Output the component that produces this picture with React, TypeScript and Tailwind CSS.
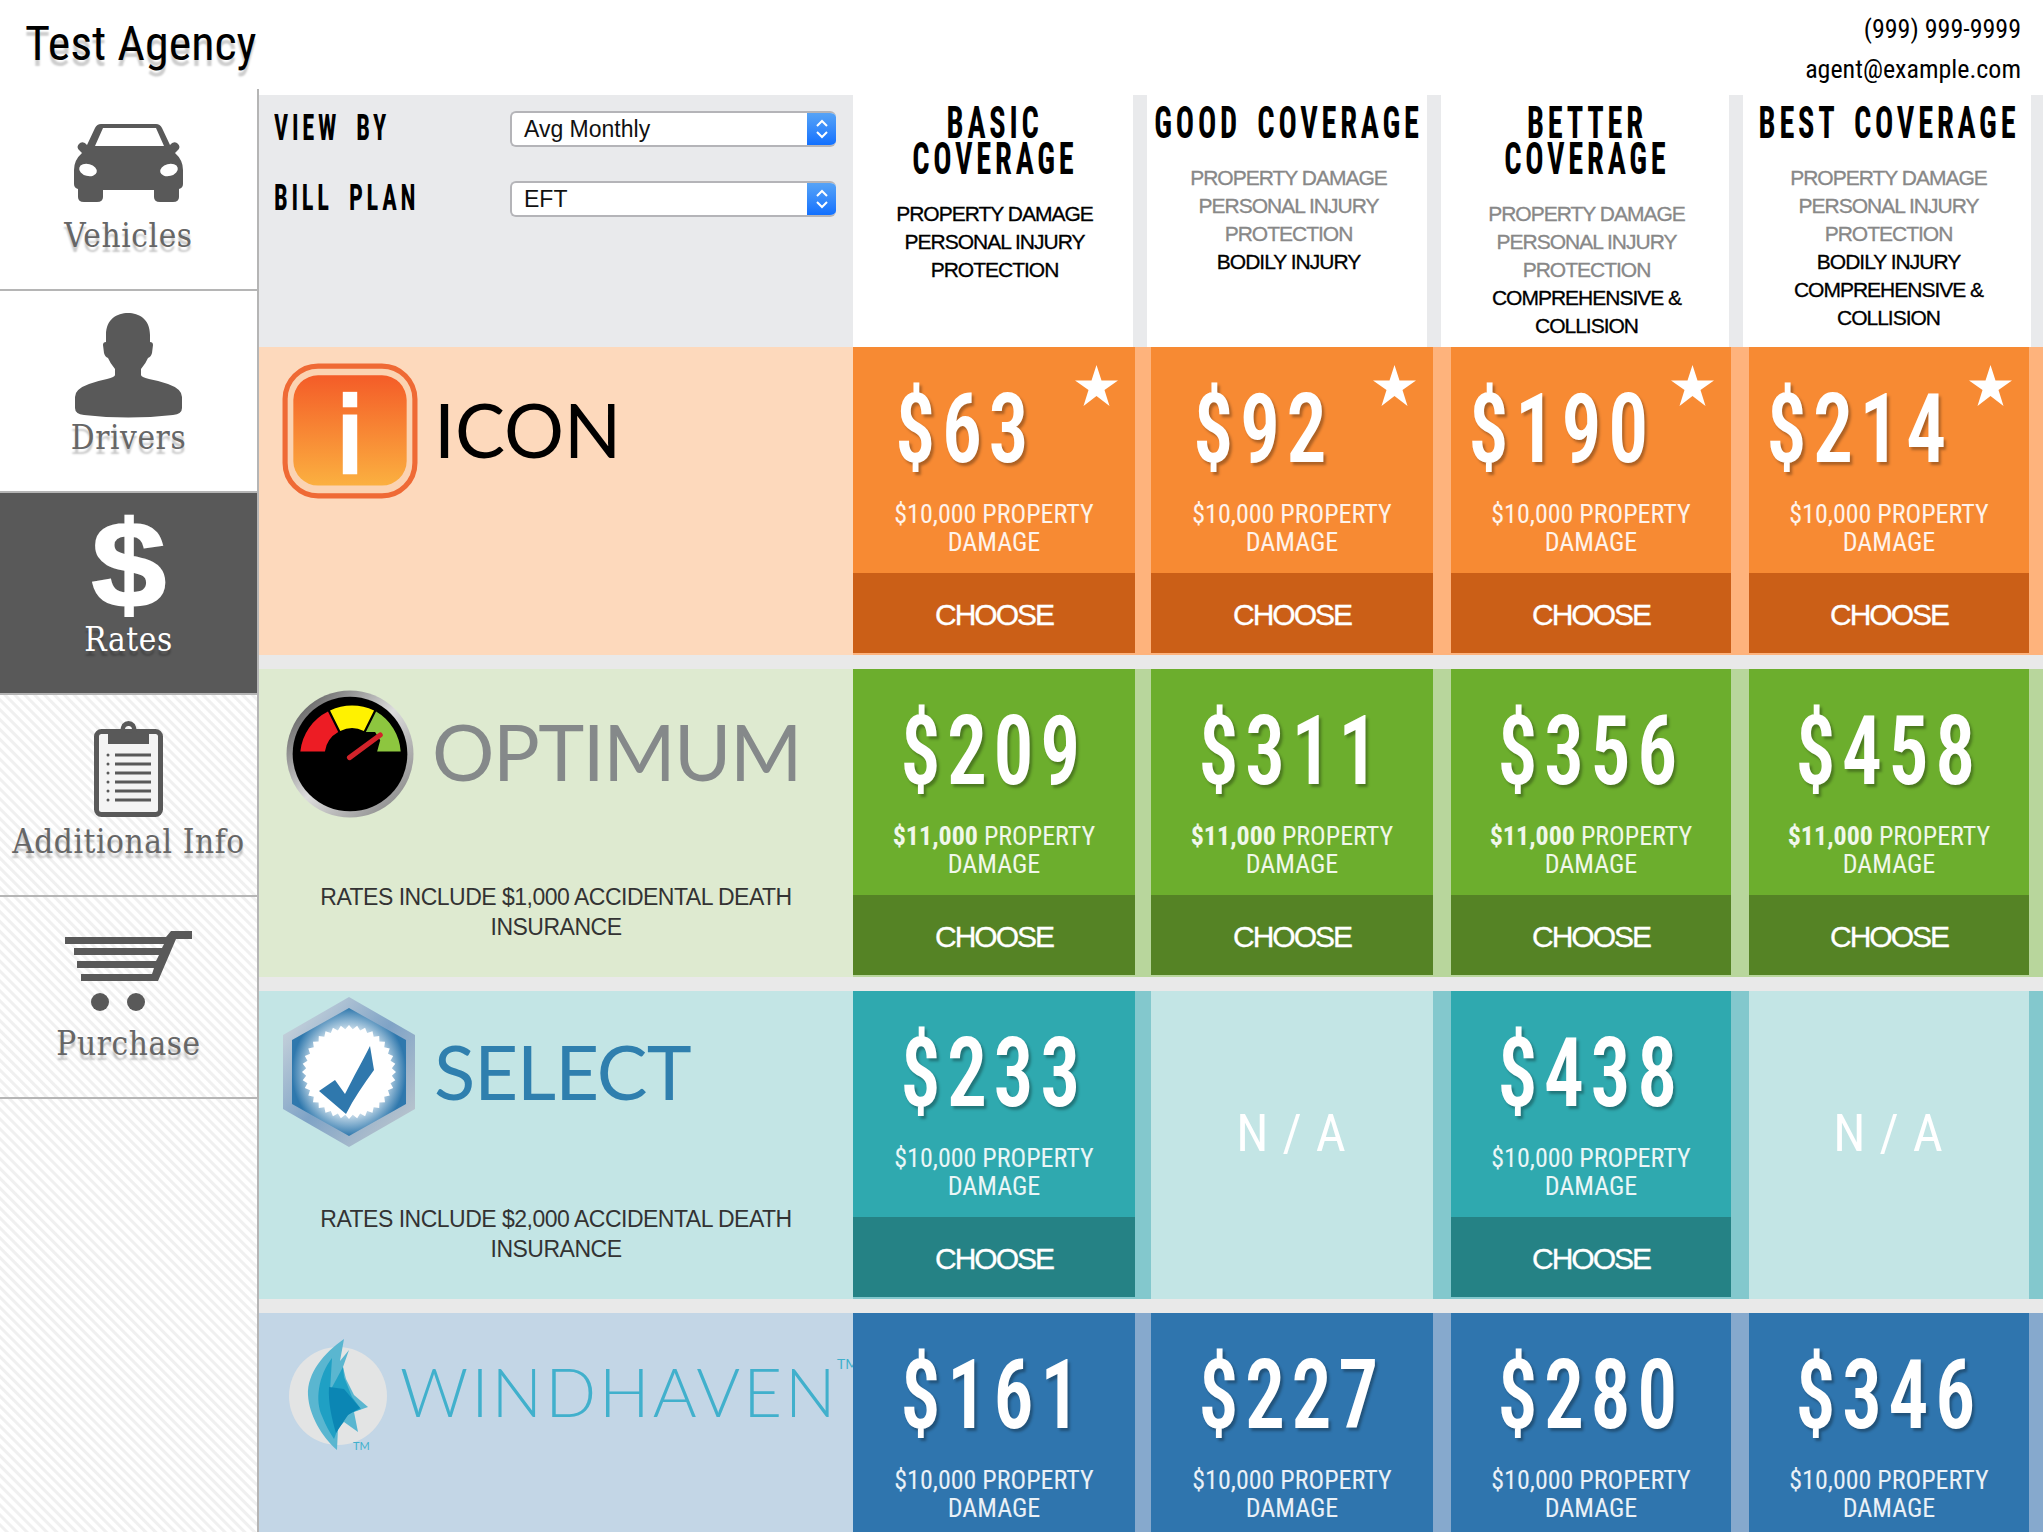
import React from "react";

// --- Types ---
type Theme = {
  left: string;
  gutter: string;
  card: string;
  band: string;
};

interface Plan {
  price: string;
  star?: boolean;
  limit?: string;
  na?: boolean;
}

interface Carrier {
  theme: Theme;
  logo: React.ReactNode;
  note?: string;
  noteGap?: string;
  plans: Plan[];
}

// Shared font stacks
const narrow = "[font-family:'Roboto_Condensed',Roboto,sans-serif] [font-stretch:75%]";
const slab = "[font-family:'DejaVu_Serif_Condensed','DejaVu_Serif',serif]";
const helv = "[font-family:'Liberation_Sans',Arial,sans-serif]";
const wordmark = "[font-family:Lato,sans-serif] whitespace-nowrap";

const stripes =
  "bg-[repeating-linear-gradient(45deg,#ffffff,#ffffff_3px,#f0f0f0_4px,#f0f0f0_6px,#ffffff_7px)]";

const cardWidths = ["w-[282px]", "ml-[16px] w-[282px]", "ml-[18px] w-[280px]", "ml-[18px] w-[280px]"];
const headWidths = ["w-[280px]", "ml-[14px] w-[280px]", "ml-[14px] w-[288px]", "ml-[14px] w-[288px]"];

// --- Sidebar icons ---
const CarIcon = () => (
  <svg width="109" height="78" viewBox="0 0 109 78" fill="#595959">
    <path
      fillRule="evenodd"
      d="M27 0H82Q86 0 88 4L96 21Q99 17 103 19Q108 23 103 27L101 29Q109 36 109 46V60Q109 64 105 65V73Q105 78 99 78H86Q80 78 80 73V66H29V73Q29 78 23 78H10Q4 78 4 73V65Q0 64 0 60V46Q0 36 8 29L6 27Q1 23 6 19Q10 17 13 21L21 4Q23 0 27 0ZM29 4L21 22H90L82 4Z"
    />
    <ellipse cx="14" cy="46" rx="9" ry="6" fill="#fff" transform="rotate(15 14 46)" />
    <ellipse cx="95" cy="46" rx="9" ry="6" fill="#fff" transform="rotate(-15 95 46)" />
  </svg>
);

const PersonIcon = () => (
  <svg width="107" height="105" viewBox="0 0 107 105" fill="#595959">
    <path d="M31 22C31 6 42 0 53 0S75 6 75 22V29Q78 29 78 32L77 40Q76 44 73 45Q71 50 66 56V62Q66 64 74 66Q85 68 93 71Q107 76 107 84V95Q107 101 98 102Q53 107 9 102Q0 101 0 95V84Q0 76 14 71Q22 68 32 66Q40 64 40 62V56Q35 50 33 45Q30 44 29 40L28 32Q28 29 31 29Z" />
  </svg>
);

const ClipboardIcon = () => (
  <svg width="69" height="96" viewBox="0 0 69 96" fill="#595959">
    <rect x="2.500" y="10.500" width="64" height="83" rx="5" fill="#f4f4f4" stroke="#595959" strokeWidth="5" />
    <path fillRule="evenodd" d="M14 11H26Q27 0 34.500 0T43 11H55V23H14ZM34.500 5A3.500 3.500 0 1 0 34.500 12A3.500 3.500 0 1 0 34.500 5Z" />
    {[34, 43, 52, 61, 70, 79].map((y) => (
      <g key={y}>
        <circle cx="14" cy={y} r="1.500" />
        <rect x="21" y={y - 1.5} width="36" height="3" />
      </g>
    ))}
  </svg>
);

const CartIcon = () => (
  <svg width="127" height="80" viewBox="0 0 127 80" fill="#595959">
    <path d="M106 0H127V8H111L93 50H16V43H87L89 37H12V30H91L94 24H9V17H97L99 13H0V6H101Z" />
    <circle cx="35" cy="71" r="9" />
    <circle cx="71" cy="71" r="9" />
  </svg>
);

const DollarIcon = () => (
  <span
    className={`-mt-[4px] block scale-x-[1.1] text-[122px] font-bold leading-[100px] text-white [-webkit-text-stroke:2px_#fff] ${helv}`}
  >
    $
  </span>
);

const navItems = [
  { label: "Vehicles", icon: <CarIcon />, bg: "bg-white" },
  { label: "Drivers", icon: <PersonIcon />, bg: "bg-white" },
  { label: "Rates", icon: <DollarIcon />, bg: "bg-[#595959]", active: true },
  { label: "Additional Info", icon: <ClipboardIcon />, bg: stripes },
  { label: "Purchase", icon: <CartIcon />, bg: stripes },
];

// --- Carrier logos ---
const IconBadge = () => (
  <svg width="136" height="136" viewBox="0 0 132 132">
    <defs>
      <linearGradient id="iconFill" x1="0" y1="0" x2="0" y2="1">
        <stop offset="0" stopColor="#f45c28" />
        <stop offset="1" stopColor="#fbb040" />
      </linearGradient>
    </defs>
    <rect x="3" y="3" width="126" height="126" rx="32" fill="#fbd3b2" stroke="#ef6a35" strokeWidth="5" />
    <rect x="11" y="12" width="110" height="107" rx="24" fill="url(#iconFill)" />
    <rect x="59" y="28" width="14" height="15" fill="#fff" />
    <rect x="59" y="50" width="14" height="58" fill="#fff" />
  </svg>
);

const GaugeBadge = () => (
  <svg width="130" height="128" viewBox="0 0 125 125">
    <defs>
      <linearGradient id="gaugeRing" x1="0" y1="0" x2="1" y2="1">
        <stop offset="0" stopColor="#444" />
        <stop offset="0.5" stopColor="#ddd" />
        <stop offset="1" stopColor="#777" />
      </linearGradient>
    </defs>
    <circle cx="62.500" cy="62.500" r="62" fill="url(#gaugeRing)" />
    <circle cx="62.500" cy="62.500" r="56" fill="#000" />
    <path d="M14 60A49 49 0 0 1 41 21L51 41A26 26 0 0 0 38 60Z" fill="#ed1c24" />
    <path d="M43 20A49 49 0 0 1 86 20L76 40A26 26 0 0 0 53 40Z" fill="#fff200" />
    <path d="M88 21A49 49 0 0 1 112 60H89L92 49 87 41 78 41Z" fill="#8dc63f" />
    <path d="M62 66L92 44" stroke="#d2232a" strokeWidth="5" strokeLinecap="round" />
  </svg>
);

const burst = Array.from({ length: 72 }, (_, i) => {
  const r = i % 2 === 0 ? 47 : 43;
  const a = (i / 72) * Math.PI * 2;
  return `${67 + r * Math.cos(a)},${76 + r * Math.sin(a)}`;
}).join(" ");

const HexBadge = () => (
  <svg width="134" height="152" viewBox="0 0 134 152">
    <defs>
      <radialGradient id="hexFill">
        <stop offset="0.6" stopColor="#e8f1f7" />
        <stop offset="1" stopColor="#2f78ad" />
      </radialGradient>
      <linearGradient id="hexEdge" x1="0" y1="0" x2="1" y2="1">
        <stop offset="0" stopColor="#d8dde0" />
        <stop offset="0.5" stopColor="#7fa3c6" />
        <stop offset="1" stopColor="#c8cdd0" />
      </linearGradient>
    </defs>
    <polygon points="67,1 133,39 133,113 67,151 1,113 1,39" fill="url(#hexEdge)" />
    <polygon points="67,12 124,44 124,108 67,140 10,108 10,44" fill="url(#hexFill)" />
    <polygon points={burst} fill="#fff" />
    <path d="M37 95L53 84 63 98C72 80 80 66 88 50L92 74C82 88 72 102 64 118Z" fill="#2f78ad" />
  </svg>
);

const WingBadge = () => (
  <svg width="100" height="120" viewBox="0 0 100 120">
    <circle cx="50" cy="65" r="49" fill="#e3e4e4" />
    <path d="M56 8C36 22 19 42 20 64C21 84 34 106 49 119L50 97 56 91 70 101 66 81 80 76 66 64 58 48 55 36 61 19 52 30Z" fill="#5ab6d0" />
    <path d="M44 27C30 45 27 70 34 85C38 95 42 102 46 108L52 92 62 82 73 78 64 66 56 46 55 36 42 60Z" fill="#1fa0c4" />
    <path d="M41 56L56 58 72 77 60 84 48 102C44 88 40 72 41 56Z" fill="#0b86b4" />
  </svg>
);

// --- Pricing data ---
const carriers: Carrier[] = [
  {
    theme: { left: "bg-[#fdd9bc]", gutter: "bg-[#feb37c]", card: "bg-[#f78a33]", band: "bg-[#cb5f17]" },
    logo: (
      <div className="flex pl-[23px] pt-[16px]">
        <IconBadge />
        <span className={`ml-[16px] mt-[22px] h-[88px] text-[75px] leading-[88px] text-black ${wordmark}`}>ICON</span>
      </div>
    ),
    plans: [
      { price: "$63", star: true },
      { price: "$92", star: true },
      { price: "$190", star: true },
      { price: "$214", star: true },
    ],
  },
  {
    theme: { left: "bg-[#deead0]", gutter: "bg-[#b8d69c]", card: "bg-[#6cae2d]", band: "bg-[#558325]" },
    logo: (
      <div className="flex pl-[26px] pt-[21px]">
        <GaugeBadge />
        <span className={`ml-[17px] mt-[16px] h-[90px] text-[78px] leading-[90px] tracking-[-1.5px] text-[#85898a] ${wordmark}`}>OPTIMUM</span>
      </div>
    ),
    note: "RATES INCLUDE $1,000 ACCIDENTAL DEATH",
    noteGap: "mt-[64px]",
    plans: [
      { price: "$209", limit: "$11,000" },
      { price: "$311", limit: "$11,000" },
      { price: "$356", limit: "$11,000" },
      { price: "$458", limit: "$11,000" },
    ],
  },
  {
    theme: { left: "bg-[#c3e5e5]", gutter: "bg-[#83c8cd]", card: "bg-[#2fa9af]", band: "bg-[#258285]" },
    logo: (
      <div className="flex pl-[23px] pt-[5px]">
        <HexBadge />
        <span className={`ml-[18px] mt-[30px] h-[90px] text-[76px] leading-[90px] tracking-[-1px] text-[#2f7fae] ${wordmark}`}>SELECT</span>
      </div>
    ),
    note: "RATES INCLUDE $2,000 ACCIDENTAL DEATH",
    noteGap: "mt-[56px]",
    plans: [{ price: "$233" }, { price: "", na: true }, { price: "$438" }, { price: "", na: true }],
  },
  {
    theme: { left: "bg-[#c3d6e6]", gutter: "bg-[#86a9cd]", card: "bg-[#2f75ae]", band: "bg-[#255c8a]" },
    logo: (
      <div className="relative flex pl-[29px] pt-[18px]">
        <WingBadge />
        <span className={`ml-[12px] mt-[20px] h-[80px] text-[67px] font-light leading-[80px] tracking-[3px] text-[#41b0cc] ${wordmark}`}>WINDHAVEN</span>
        <span className={`absolute left-[578px] top-[40px] text-[14px] text-[#41b0cc] ${wordmark}`}>TM</span>
        <span className={`absolute left-[94px] top-[125px] text-[11px] text-[#41b0cc] ${wordmark}`}>TM</span>
      </div>
    ),
    plans: [{ price: "$161" }, { price: "$227" }, { price: "$280" }, { price: "$346" }],
  },
];

const headers = [
  { title: ["BASIC", "COVERAGE"], off: [], on: ["PROPERTY DAMAGE", "PERSONAL INJURY", "PROTECTION"] },
  { title: ["GOOD COVERAGE"], off: ["PROPERTY DAMAGE", "PERSONAL INJURY", "PROTECTION"], on: ["BODILY INJURY"] },
  {
    title: ["BETTER", "COVERAGE"],
    off: ["PROPERTY DAMAGE", "PERSONAL INJURY", "PROTECTION"],
    on: ["COMPREHENSIVE &", "COLLISION"],
  },
  {
    title: ["BEST COVERAGE"],
    off: ["PROPERTY DAMAGE", "PERSONAL INJURY", "PROTECTION"],
    on: ["BODILY INJURY", "COMPREHENSIVE &", "COLLISION"],
  },
];

// --- Small pieces ---
const FakeSelect: React.FC<{ value: string }> = ({ value }) => (
  <div className="flex h-[36px] w-[326px] overflow-hidden rounded-[6px] border-t-2 border-b-2 border-l-2 border-[#b4b4b8] bg-white">
    <span className={`flex-1 pl-[12px] text-[23px] leading-[32px] text-[#111] ${helv}`}>{value}</span>
    <span className="-my-[2px] flex w-[29px] flex-col items-center justify-center bg-gradient-to-b from-[#5aa6f5] to-[#0a6cff]">
      <svg width="14" height="24" viewBox="0 0 14 24" fill="none" stroke="#fff" strokeWidth="2">
        <path d="M2 9L7 4 12 9M2 15L7 20 12 15" />
      </svg>
    </span>
  </div>
);

const FilterLabel: React.FC<{ text: string }> = ({ text }) => (
  <span
    className={`-mt-[2px] w-[180px] origin-left scale-x-[0.68] whitespace-nowrap text-[36px] font-bold tracking-[5.5px] text-black [word-spacing:10px] ${narrow}`}
  >
    {text}
  </span>
);

const PlanCard: React.FC<{ plan: Plan; theme: Theme; width: string }> = ({ plan, theme, width }) => {
  if (plan.na) {
    return (
      <div className={`${width} flex items-center justify-center pb-[22px] ${theme.left}`}>
        <span className={`pl-[2px] text-[52px] tracking-[4px] text-white [word-spacing:-6px] ${narrow}`}>N / A</span>
      </div>
    );
  }
  return (
    <div className={`${width} relative mb-[2px] flex flex-col ${theme.card}`}>
      {plan.star && (
        <svg className="absolute right-[17px] top-[18px]" width="43" height="41" viewBox="0 0 43 41" fill="#fff">
          <polygon points="21.500,0 26.500,15.500 43,15.500 29.500,25 34.500,41 21.500,31 8.500,41 13.500,25 0,15.500 16.500,15.500" />
        </svg>
      )}
      <div className={`mt-[34px] flex h-[96px] justify-center whitespace-nowrap ${plan.star ? "pr-[58px]" : ""}`}>
        <span
          className={`block scale-x-[0.82] text-[97px] font-semibold leading-[96px] tracking-[8px] text-white [text-shadow:3px_3px_3px_rgba(0,0,0,0.3)] ${narrow}`}
        >
          {plan.price}
        </span>
      </div>
      <div className={`mt-[23px] text-center text-[26px] leading-[28px] text-white/90 ${narrow}`}>
        {plan.limit ? <b className="font-bold">{plan.limit}</b> : "$10,000"} PROPERTY
        <br />
        DAMAGE
      </div>
      <div
        className={`absolute inset-x-0 bottom-0 flex h-[80px] items-center justify-center pt-[2px] text-[30px] tracking-[-2px] text-white [-webkit-text-stroke:0.3px_#fff] ${helv} ${theme.band}`}
      >
        CHOOSE
      </div>
    </div>
  );
};

// --- Main Component ---
const App: React.FC = () => {
  return (
    <div className="h-[1532px] w-[2043px] overflow-hidden bg-white">
      {/* Top bar */}
      <div className="flex h-[89px] items-start justify-between">
        <h1
          className={`pl-[25px] pt-[14px] text-[48px] leading-[60px] text-black [text-shadow:0_6px_2px_rgba(0,0,0,0.2)] ${narrow}`}
        >
          Test Agency
        </h1>
        <div className={`pr-[22px] pt-[9px] text-right text-[26px] leading-[40px] text-black ${narrow}`}>
          <div>(999) 999-9999</div>
          <div>agent@example.com</div>
        </div>
      </div>

      <div className="flex h-[1443px]">
        {/* Sidebar */}
        <aside className={`w-[259px] shrink-0 border-r-2 border-[#b5b5b5] ${stripes}`}>
          {navItems.map((item) => (
            <div key={item.label} className={`h-[202px] border-b-2 border-[#b5b5b5] ${item.bg}`}>
              <div className="flex h-[127px] items-center justify-center pt-[21px]">{item.icon}</div>
              <div
                className={`h-[40px] whitespace-nowrap text-center text-[33px] leading-[40px] tracking-[0.6px] [text-shadow:0_5px_2px_rgba(0,0,0,0.22)] ${slab} ${item.active ? "text-white" : "text-[#666]"}`}
              >
                {item.label}
              </div>
            </div>
          ))}
        </aside>

        {/* Pricing table */}
        <main className="w-[1784px] shrink-0 pt-[6px]">
          <div className="flex h-[252px] bg-[#e9eaec]">
            <div className="w-[594px] shrink-0 pl-[15px] pt-[16px]">
              <div className="flex h-[36px] items-center justify-between pr-[17px]">
                <FilterLabel text="VIEW BY" />
                <FakeSelect value="Avg Monthly" />
              </div>
              <div className="mt-[34px] flex h-[36px] items-center justify-between pr-[17px]">
                <FilterLabel text="BILL PLAN" />
                <FakeSelect value="EFT" />
              </div>
            </div>
            {headers.map((h, i) => (
              <div key={h.title[0]} className={`${headWidths[i]} shrink-0 bg-white pt-[10px] text-center`}>
                {h.title.map((line) => (
                  <div key={line} className="flex h-[36px] justify-center whitespace-nowrap pl-[4px]">
                    <span
                      className={`block scale-x-[0.69] text-[44px] font-bold leading-[36px] tracking-[5.5px] text-black [word-spacing:8px] ${narrow}`}
                    >
                      {line}
                    </span>
                  </div>
                ))}
                <div className={`mt-[23px] pl-[3px] text-[21px] leading-[28px] tracking-[-1px] [-webkit-text-stroke:0.3px] ${helv}`}>
                  {h.off.map((line) => (
                    <div key={line} className="text-[#888]">
                      {line}
                    </div>
                  ))}
                  {h.on.map((line) => (
                    <div key={line} className="text-black">
                      {line}
                    </div>
                  ))}
                </div>
              </div>
            ))}
          </div>

          <div className="bg-[#e9e9e9]">
            {carriers.map((c, idx) => (
              <div key={idx} className="pb-[14px]">
                <div className={`flex h-[308px] ${c.theme.gutter}`}>
                  <div className={`w-[594px] shrink-0 ${c.theme.left}`}>
                    {c.logo}
                    {c.note && (
                      <p className={`${c.noteGap} text-center text-[23px] leading-[30px] tracking-[-0.5px] text-[#333] ${helv}`}>
                        {c.note}
                        <br />
                        INSURANCE
                      </p>
                    )}
                  </div>
                  {c.plans.map((plan, i) => (
                    <PlanCard key={i} plan={plan} theme={c.theme} width={cardWidths[i]} />
                  ))}
                </div>
              </div>
            ))}
          </div>
        </main>
      </div>
    </div>
  );
};

export default App;
